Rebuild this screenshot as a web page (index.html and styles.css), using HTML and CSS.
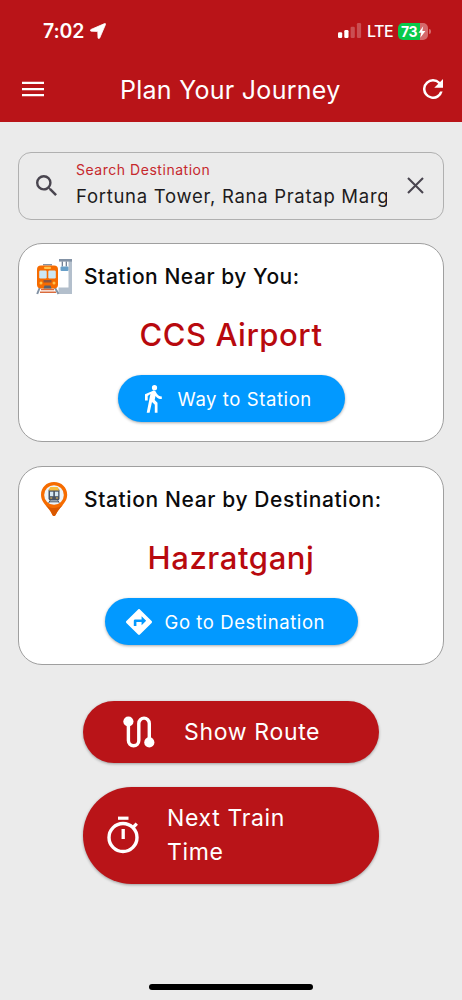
FILE: index.html
```html
<!DOCTYPE html>
<html lang="en">
<head>
<meta charset="utf-8">
<title>Plan Your Journey</title>
<link rel="stylesheet" href="styles.css">
</head>
<body>
<div class="screen">
  <header class="header">
    <div class="status">
      <span class="clock">7:02</span>
      <svg class="location" width="16" height="16" viewBox="0 0 16 16"><path d="M14.600.600.900 6.500c-.9.5-.7 1.600.3 1.700l6.200.2c.3 0 .4.1.4.4l.2 6c.1 1 1.200 1.100 1.700.2L15.500 1.500c.3-.7-.2-1.200-.9-.9z" fill="#fff" stroke="#fff" stroke-width=".8" stroke-linejoin="round"/></svg>
      <svg class="signal" width="24" height="16" viewBox="0 0 24 16"><g fill="#fff"><rect x="0" y="9.300" width="4.200" height="5.700" rx="1.200"/><rect x="6.300" y="7" width="4.200" height="8" rx="1.200"/><g opacity=".25"><rect x="12.600" y="3.700" width="4.200" height="11.300" rx="1.200"/><rect x="18.900" y="0" width="4.200" height="15" rx="1.200"/></g></g></svg>
      <span class="network">LTE</span>
      <span class="battery"><span class="battery-text">73</span><svg class="bolt" width="8" height="12" viewBox="0 0 8 12"><path d="M5.200.3.5 6.700h2.800L2.300 11.700 7.400 5H4.300z" fill="#fff"/></svg></span>
      <span class="battery-cap"></span>
    </div>
    <div class="appbar">
      <svg width="22" height="16" viewBox="0 0 22 16"><path d="M0 1.900h22M0 8.200h22M0 14.200h22" stroke="#fff" stroke-width="2.200"/></svg>
      <h1 class="title">Plan Your Journey</h1>
      <svg width="20" height="20" viewBox="4 4 16 16"><path fill="#fff" d="M17.650 6.350A7.958 7.958 0 0 0 12 4a8 8 0 1 0 7.730 10h-2.080A6 6 0 1 1 12 6c1.660 0 3.140.690 4.220 1.780L13 11h7V4z"/></svg>
    </div>
  </header>
  <main class="content">
    <div class="search">
      <svg class="search-icon" width="21" height="21" viewBox="3 3 17.500 17.500"><path fill="#49454f" d="M15.500 14h-.790l-.280-.270A6.471 6.471 0 0 0 16 9.500 6.500 6.500 0 1 0 9.500 16c1.610 0 3.090-.590 4.230-1.570l.270.280v.790l5 4.990L20.490 19zm-6 0a4.500 4.500 0 1 1 0-9 4.500 4.500 0 0 1 0 9z"/></svg>
      <div class="field">
        <span class="field-label">Search Destination</span>
        <span class="field-value">Fortuna Tower, Rana Pratap Marg</span>
      </div>
      <svg class="clear" width="17" height="17" viewBox="0 0 17 17"><path d="M1 1l15 15M16 1 1 16" stroke="#49454f" stroke-width="2.100"/></svg>
    </div>
    <section class="card">
      <div class="card-head">
        <svg class="card-icon" width="38" height="38" viewBox="0 0 38 38">
          <path d="M33.500 3H37v34H23.500v-6.500h10z" fill="#b3bfcc"/><path d="M24 2h13v2.600H24z" fill="#8392a5"/>
          <path d="M27.300 4.500v5M31.300 4.500v5" stroke="#64748b" stroke-width="1.200"/><rect x="25.500" y="9.500" width="8" height="4.500" rx="1" fill="#689fc8"/>
          <path d="M5 30 2.200 37M19.500 30l4 7" stroke="#8292a4" stroke-width="2"/><path d="M6 32.500h13M5 35.300h16" stroke="#d96b3c" stroke-width="1.500"/>
          <path d="M8 8.500V7h9v1.500" fill="#8493a5"/><rect x="2" y="8.500" width="21" height="23" rx="4" fill="#f66b00"/>
          <rect x="9" y="9.800" width="7" height="2.200" rx="1" fill="#ffc34e"/><rect x="4.200" y="13.500" width="7.500" height="8" rx="1.200" fill="#cce8f6"/><rect x="13.300" y="13.500" width="7.500" height="8" rx="1.200" fill="#cce8f6"/>
          <rect x="8.500" y="23" width="8" height="2.500" fill="#8d563f"/><circle cx="6" cy="26" r="1.500" fill="#ffc34e"/><circle cx="19" cy="26" r="1.500" fill="#ffc34e"/><path d="M9.500 28.500h6l1 3h-8z" fill="#596270"/>
        </svg>
        <h2 class="card-title near-title">Station Near by You:</h2>
      </div>
      <div class="station airport">CCS Airport</div>
      <button class="pill way">
        <svg width="18" height="28" viewBox="0 0 18 28"><circle cx="10.500" cy="2.700" r="2.600" fill="#fff"/><path fill="#fff" d="M6.400 8.900 2.700 27.700h2.900l2.400-10.600 2.800 2.700v7.900h2.700v-10l-2.800-2.800.8-4c1.800 2.100 3.700 3.200 6.300 3.200v-2.700c-2.200 0-3.900-1.100-4.900-2.700l-1.300-2.100C10.900 5.400 9.700 5.400 8.500 6L1 9.200v6.200h2.700V11z"/></svg>
        <span>Way to Station</span>
      </button>
    </section>
    <section class="card">
      <div class="card-head">
        <svg class="card-icon" width="38" height="38" viewBox="0 0 38 38">
          <path d="M19 2C11.500 2 6 7.500 6 14.700 6 23 13 26 17.300 34.700c.7 1.700 2.700 1.700 3.400 0C25 26 32.200 23 32.200 14.700 32.200 7.500 26.500 2 19 2z" fill="#f66c00"/><path d="M11 25.500c3 3 4.700 5.500 6.300 9.200.7 1.700 2.700 1.700 3.400 0C22.400 31 25 28 28 25c-5 4-12 4-17 .5z" fill="#d95800"/>
          <circle cx="19" cy="15" r="9.800" fill="#edf4f9"/><rect x="13.500" y="8.500" width="11" height="12" rx="2" fill="#475363"/><path d="M15.200 7h7.500l1.500 3.500H13.700z" fill="#f7bd3e"/>
          <rect x="15" y="11.700" width="3.300" height="4.500" fill="#d5e8f3"/><rect x="19.900" y="11.700" width="3.300" height="4.500" fill="#d5e8f3"/><path d="M15.200 18h2M20.900 18h2" stroke="#ffc34e" stroke-width="1.200"/><path d="m15.200 20.300-1.500 2.500m9-2.500 1.500 2.500M14.200 21.800h9.500" stroke="#475363"/>
        </svg>
        <h2 class="card-title dest-title">Station Near by Destination:</h2>
      </div>
      <div class="station hazrat">Hazratganj</div>
      <button class="pill go">
        <svg width="26" height="26" viewBox="1.990 1.990 20.020 20.020"><path fill="#fff" d="m21.710 11.290-9-9a.996.996 0 0 0-1.410 0l-9 9a.996.996 0 0 0 0 1.410l9 9c.390.390 1.020.390 1.410 0l9-9a.996.996 0 0 0 0-1.410zM14 14.500V12h-4v3H8v-4c0-.550.450-1 1-1h5V7.500l3.500 3.500z"/></svg>
        <span>Go to Destination</span>
      </button>
    </section>
    <div class="actions">
      <button class="action route">
        <svg width="32" height="32" viewBox="0 0 32 32"><circle cx="5.400" cy="5.500" r="5.100" fill="#fff"/><circle cx="26.300" cy="26.400" r="5.100" fill="#fff"/><path d="M5.400 6v18.500a5.200 5.200 0 0 0 10.400 0V7.400a5.200 5.200 0 0 1 10.500 0V25" fill="none" stroke="#fff" stroke-width="3.400"/></svg>
        <span>Show Route</span>
      </button>
      <button class="action next">
        <svg class="timer" width="32" height="38" viewBox="0 0 32 38"><circle cx="16" cy="21.500" r="14" fill="none" stroke="#fff" stroke-width="3.400"/><path d="M11 2.200h10.500" stroke="#fff" stroke-width="3.200"/><path d="M16.200 13v10M25.500 12l4.300-4.300" stroke="#fff" stroke-width="3.300"/></svg>
        <span>Next Train<br>Time</span>
      </button>
    </div>
  </main>
  <div class="home-indicator"></div>
</div>
</body>
</html>
```

FILE: styles.css
```css
* { box-sizing: border-box; }
body { margin: 0; font-family: Inter, "Liberation Sans", sans-serif; color: #0b0b0c; }
svg { display: block; flex: none; }
h1, h2 { margin: 0; font-weight: 400; }
button { border: 0; font: inherit; color: #fff; padding: 0; text-align: left; }

.screen { width: 462px; height: 1000px; background: #ebebeb; display: flex; flex-direction: column; overflow: hidden; }
.header { height: 122px; background: #b91418; color: #fff; flex: none; padding-top: 21px; }
.status { height: 20px; display: flex; align-items: center; padding-left: 43px; white-space: nowrap; }
.clock { width: 46px; font-size: 19.5px; font-weight: 600; letter-spacing: -.1px; }
.location { margin-left: 1px; }
.signal { margin-left: 232px; }
.network { width: 31px; margin-left: 5px; font-size: 16px; font-weight: 500; letter-spacing: -.5px; }
.battery { width: 30px; height: 17px; margin-top: 1px; border-radius: 5px; display: flex; align-items: center; padding-left: 3px; background: linear-gradient(90deg, #08c94b 22px, #d5696b 22px); }
.battery-text { width: 16px; font-size: 14px; font-weight: 700; letter-spacing: -.5px; }
.bolt { margin-left: 1px; }
.battery-cap { width: 2px; height: 5px; margin-left: 1px; background: #d5696b; border-radius: 0 2px 2px 0; }
.appbar { height: 58px; margin-top: 19px; padding: 0 19px 0 22px; display: flex; align-items: center; }
.title { flex: 1; margin-left: 76px; padding-top: 1px; font-size: 25px; letter-spacing: .27px; white-space: nowrap; }

.content { flex: 1; padding: 30px 18px 0; }
.search { height: 68px; border: 1px solid #b0b0b0; border-radius: 13px; display: flex; align-items: center; padding: 0 19px 0 17px; }
.search-icon { margin-top: -1px; }
.field { width: 311px; margin-left: 19px; padding-top: 2px; display: flex; flex-direction: column; white-space: nowrap; overflow: hidden; }
.field-label { color: #c6282d; font-size: 14px; line-height: 18px; letter-spacing: .53px; }
.field-value { font-size: 18.5px; line-height: 34px; letter-spacing: .71px; color: #1d1b20; }
.clear { margin-left: auto; margin-top: -1px; }

.card { height: 199px; margin-top: 23px; background: #fff; border: 1px solid #9f9f9f; border-radius: 24px; display: flex; flex-direction: column; align-items: center; }
.card + .card { margin-top: 24px; }
.card-head { align-self: stretch; height: 38px; margin: 13px 0 0 16px; display: flex; align-items: center; gap: 11px; }
.card-title { font-size: 21px; font-weight: 500; white-space: nowrap; }
.near-title { letter-spacing: .54px; }
.dest-title { letter-spacing: .62px; }
.station { height: 48px; line-height: 48px; margin-top: 16px; color: #b8090e; font-size: 31px; font-weight: 500; white-space: nowrap; }
.airport { letter-spacing: .55px; }
.hazrat { letter-spacing: .6px; }
.pill { height: 47px; margin-top: 16px; background: #0299ff; border-radius: 24px; display: flex; align-items: center; font-size: 18.5px; letter-spacing: .59px; white-space: nowrap; box-shadow: 0 1px 3px #0005; }
.way { width: 227px; padding-left: 26px; gap: 16px; }
.go { width: 253px; padding-left: 21px; gap: 13px; }

.actions { margin-top: 36px; display: flex; flex-direction: column; align-items: center; gap: 24px; }
.action { width: 296px; background: #b91418; display: flex; align-items: center; font-size: 23px; letter-spacing: .66px; white-space: nowrap; box-shadow: 0 1px 3px #0005; }
.route { height: 62px; border-radius: 31px; padding-left: 40px; gap: 29px; }
.next { height: 97px; border-radius: 48.5px; padding: 0 0 1px 24px; gap: 28px; line-height: 34px; }
.timer { margin-top: -1px; }
.home-indicator { width: 164px; height: 6px; margin: 0 auto 10px; flex: none; border-radius: 3px; background: #000; }
```
